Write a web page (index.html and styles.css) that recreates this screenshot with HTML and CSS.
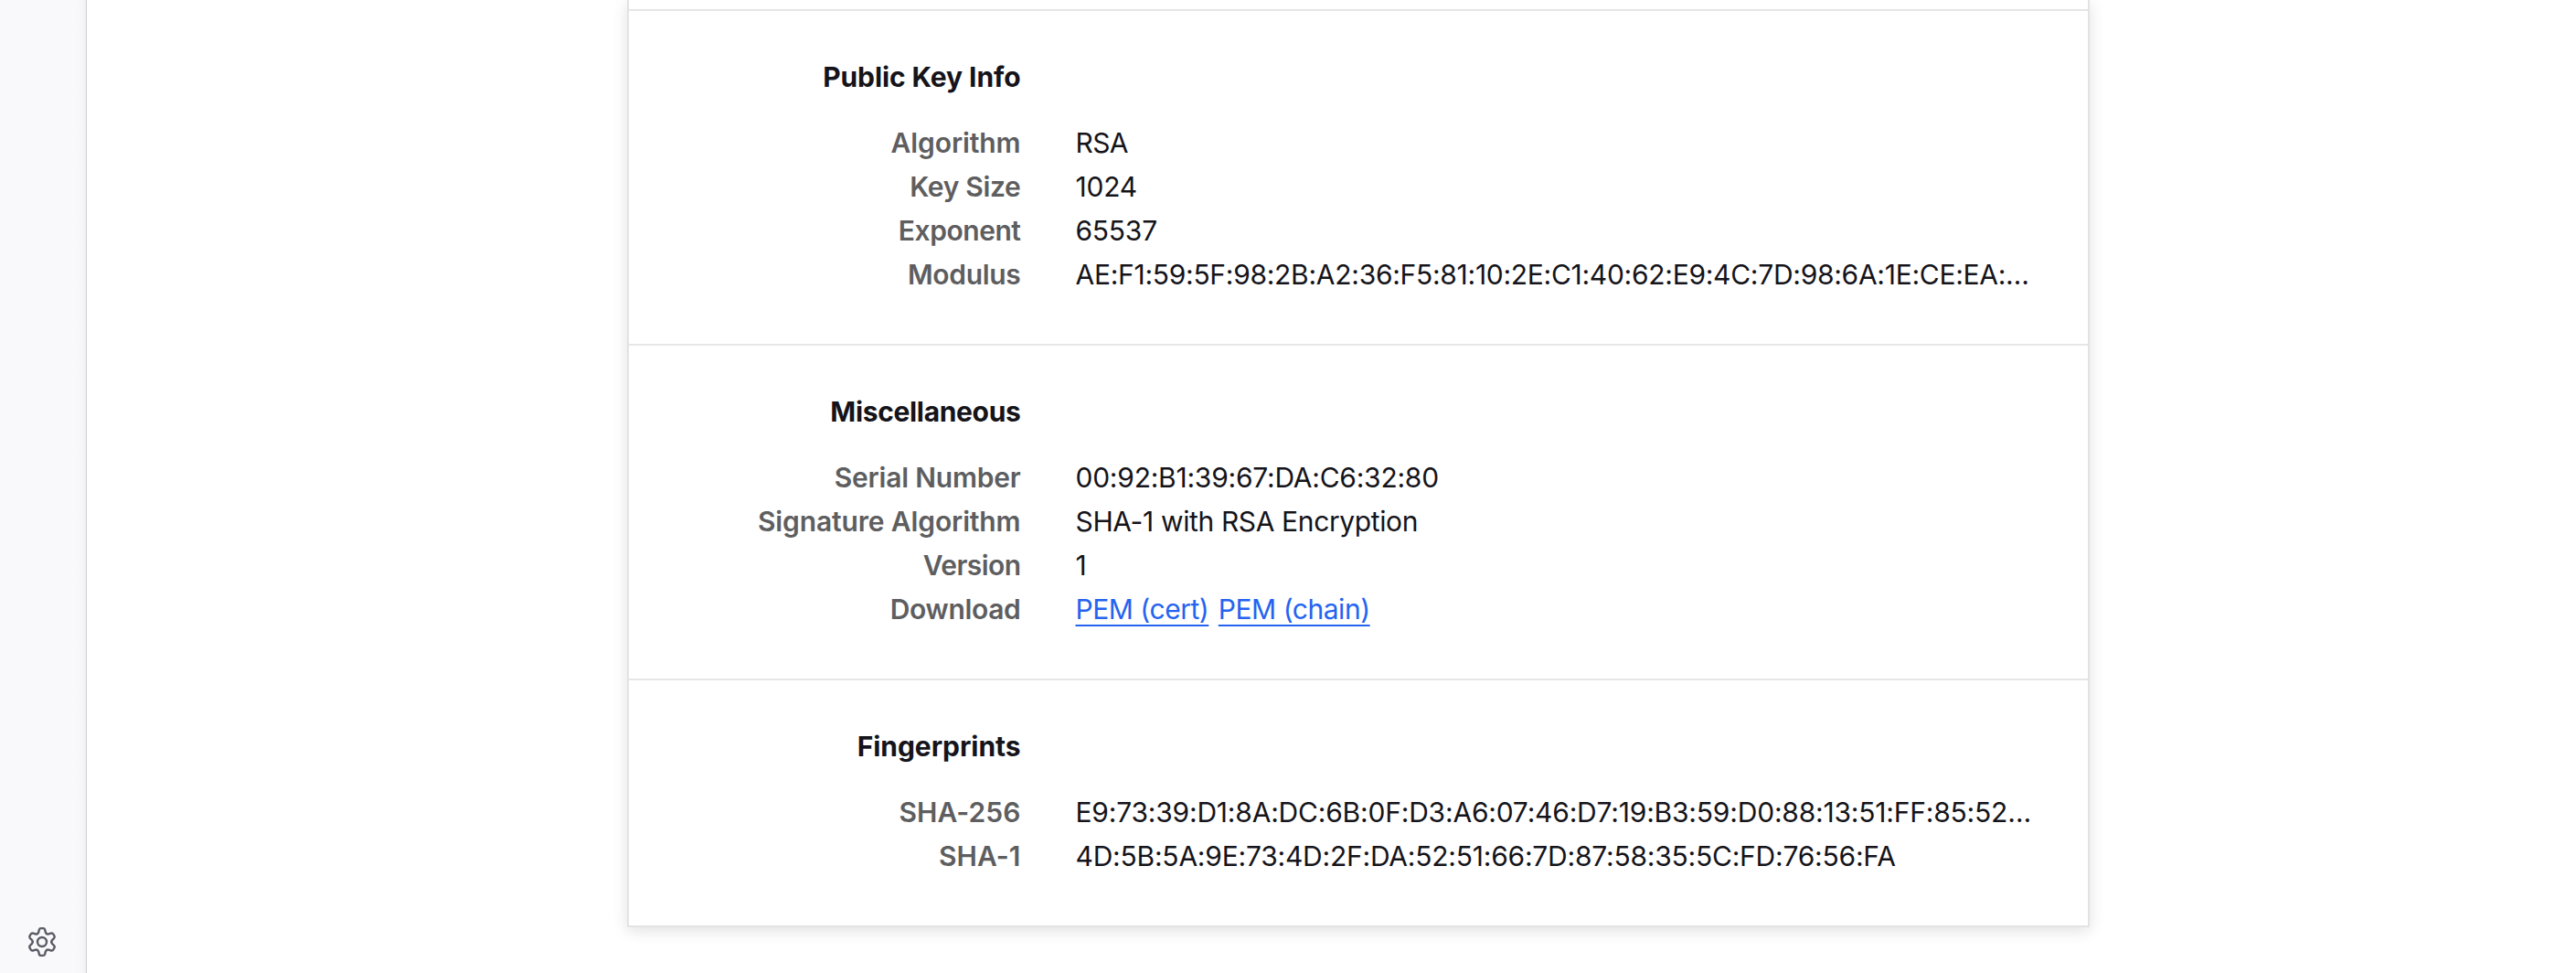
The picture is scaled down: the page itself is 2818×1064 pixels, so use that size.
FILE: index.html
```html
<!DOCTYPE html>
<html lang="en">
<head>
<meta charset="utf-8">
<title>Certificate</title>
<link rel="stylesheet" href="styles.css">
</head>
<body>
<div class="page">
  <aside class="sidebar">
    <svg class="gear" viewBox="-17 -17 34 34" fill="none" stroke="#5b5b66" stroke-width="2.4" stroke-linecap="round" stroke-linejoin="round">
      <defs>
        <path id="tooth" d="M-5.1-8.9C-4.3-9.4-3.8-10.3-3.6-11.3L-3.3-12.9C-3.05-14.1-2.3-14.9-1.2-14.9H1.2C2.3-14.9 3.05-14.1 3.3-12.9L3.6-11.3C3.8-10.3 4.3-9.4 5.1-8.9"/>
      </defs>
      <use href="#tooth"/>
      <use href="#tooth" transform="rotate(60)"/>
      <use href="#tooth" transform="rotate(120)"/>
      <use href="#tooth" transform="rotate(180)"/>
      <use href="#tooth" transform="rotate(240)"/>
      <use href="#tooth" transform="rotate(300)"/>
      <circle r="5"/>
    </svg>
  </aside>
  <main class="content">
    <article class="card">
      <section class="group">
        <h2 class="title title-key">Public Key Info</h2>
        <dl class="rows">
          <dt class="algorithm">Algorithm</dt><dd class="rsa">RSA</dd>
          <dt>Key Size</dt><dd>1024</dd>
          <dt class="exponent">Exponent</dt><dd>65537</dd>
          <dt>Modulus</dt><dd class="modulus">AE:F1:59:5F:98:2B:A2:36:F5:81:10:2E:C1:40:62:E9:4C:7D:98:6A:1E:CE:EA:…</dd>
        </dl>
      </section>
      <section class="group">
        <h2 class="title title-misc">Miscellaneous</h2>
        <dl class="rows">
          <dt class="serial">Serial Number</dt><dd>00:92:B1:39:67:DA:C6:32:80</dd>
          <dt class="signature">Signature Algorithm</dt><dd class="encryption">SHA-1 with RSA Encryption</dd>
          <dt class="version">Version</dt><dd>1</dd>
          <dt>Download</dt><dd class="links"><a href="#cert">PEM (cert)</a><a href="#chain">PEM (chain)</a></dd>
        </dl>
      </section>
      <section class="group">
        <h2 class="title">Fingerprints</h2>
        <dl class="rows">
          <dt class="sha">SHA-256</dt><dd class="sha256">E9:73:39:D1:8A:DC:6B:0F:D3:A6:07:46:D7:19:B3:59:D0:88:13:51:FF:85:52…</dd>
          <dt class="sha">SHA-1</dt><dd class="sha1">4D:5B:5A:9E:73:4D:2F:DA:52:51:66:7D:87:58:35:5C:FD:76:56:FA</dd>
        </dl>
      </section>
    </article>
  </main>
</div>
</body>
</html>
```
FILE: styles.css
```css
* { box-sizing: border-box; }

body {
  margin: 0;
  background: #fff;
  color: #15141a;
  font-family: Inter, "Liberation Sans", sans-serif;
  font-size: 30px;
}

.page {
  display: flex;
  height: 1064px;
  overflow: hidden;
}

.sidebar {
  display: flex;
  flex: none;
  align-items: flex-end;
  width: 95px;
  padding: 0 0 17px 29px;
  border-right: 1px solid #cfcfd3;
  background: linear-gradient(to left, #f0f0f3, #f6f6f8 4px, #f9f9fb 12px);
}

.gear {
  width: 34px;
  height: 34px;
}

.content {
  flex: 1;
  padding-left: 591px;
}

.card {
  width: 1600px;
  height: 1014px;
  border: 2px solid #e3e3e3;
  border-top: 0;
  box-shadow: 0 4px 16px rgba(12, 12, 13, 0.12);
  padding-top: 10px;
}

.group {
  border-top: 2px solid #e6e6e6;
  padding: 54px 60px 52px 0;
}

.title {
  width: 428.5px;
  margin: 0 0 30px;
  font-size: 30px;
  font-weight: 700;
  line-height: 36px;
  text-align: right;
  letter-spacing: -0.05px;
}

.title-key { letter-spacing: -0.09px; }
.title-misc { letter-spacing: -0.33px; }

.rows {
  display: grid;
  grid-template-columns: 428.5px 1fr;
  column-gap: 60px;
  margin: 0;
  line-height: 48px;
  white-space: nowrap;
}

dt {
  color: #5e5e60;
  font-weight: 600;
  text-align: right;
  letter-spacing: -0.32px;
}

dd {
  margin: 0;
  letter-spacing: -0.24px;
}

.algorithm { letter-spacing: -0.1px; }
.exponent { letter-spacing: -0.45px; }
.serial { letter-spacing: -0.2px; }
.signature { letter-spacing: -0.13px; }
.version { letter-spacing: -0.55px; }
.sha { letter-spacing: 0.05px; }
.rsa { letter-spacing: -0.6px; }
.modulus { letter-spacing: -0.28px; }
.encryption { letter-spacing: -0.37px; }
.sha256 { letter-spacing: -0.2px; }
.sha1 { letter-spacing: -0.22px; }

.links {
  display: flex;
  gap: 10.5px;
  letter-spacing: -0.47px;
}

.links a {
  color: #2563f0;
  text-decoration: underline;
  text-decoration-thickness: 2px;
  text-underline-offset: 6px;
}
```
